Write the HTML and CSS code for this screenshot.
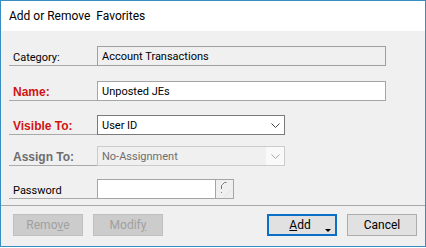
FILE: index.html
```html
<!DOCTYPE html>
<html>
<head>
<meta charset="utf-8">
<link rel="stylesheet" href="styles.css">
</head>
<body>
<div class="window">
  <div class="titlebar"><span class="title">Add or Remove&nbsp; Favorites</span></div>
  <div class="content">
    <div class="form">
      <div class="row r-cat">
        <div class="label">Category:</div>
        <div class="field readonly wide"><span class="val">Account Transactions</span></div>
      </div>
      <div class="row r-name">
        <div class="label req">Name:</div>
        <div class="field input wide"><span class="val">Unposted JEs</span></div>
      </div>
      <div class="row r-vis">
        <div class="label req">Visible To:</div>
        <div class="field select">
          <span class="val">User ID</span>
          <span class="arrow"><svg width="9" height="5" viewBox="0 0 9 5"><polyline points="0.5,0.5 4.5,4.5 8.5,0.5" fill="none" stroke="#444" stroke-width="1"/></svg></span>
        </div>
      </div>
      <div class="row r-assign">
        <div class="label dis">Assign To:</div>
        <div class="field select disabled">
          <span class="val">No-Assignment</span>
          <span class="arrow"><svg width="9" height="5" viewBox="0 0 9 5"><polyline points="0.5,0.5 4.5,4.5 8.5,0.5" fill="none" stroke="#a8a8a8" stroke-width="1"/></svg></span>
        </div>
      </div>
      <div class="row r-pw">
        <div class="label">Password</div>
        <div class="field input pw"></div>
        <div class="pwbtn">
          <svg width="17" height="20" viewBox="0 0 17 20">
            <path d="M10.5 2.5 L8.5 2.5 L6.5 4.5 L5.5 5.5 L5.5 9" fill="none" stroke="#777" stroke-width="1"/>
            <rect x="5" y="12" width="1" height="1" fill="#888"/>
            <path d="M8 17 L15 10" fill="none" stroke="#e2e2e2" stroke-width="1"/>
          </svg>
        </div>
      </div>
    </div>
    <div class="sep"></div>
    <div class="buttons">
      <div class="btn disabled">Remo<u>v</u>e</div>
      <div class="btn disabled">Modif<u>y</u></div>
      <div class="spacer"></div>
      <div class="btn default"><span class="addtxt"><u>A</u>dd</span><span class="drop"></span></div>
      <div class="btn">Cancel</div>
    </div>
  </div>
</div>
</body>
</html>
```

FILE: styles.css
```css
html, body {
  margin: 0;
  padding: 0;
  background: #ffffff;
}

body {
  width: 426px;
  height: 248px;
  overflow: hidden;
  font-family: Roboto, "Liberation Sans", sans-serif;
  font-size: 11px;
  color: #000;
}

.window {
  box-sizing: border-box;
  width: 426px;
  height: 247px;
  border: 1px solid #3a8dc2;
  background: #f0f0f0;
  display: flex;
  flex-direction: column;
}

.titlebar {
  height: 30px;
  background: #ffffff;
  display: flex;
  align-items: center;
  padding-left: 8px;
  padding-bottom: 1px;
  box-sizing: border-box;
}

.title {
  font-size: 12px;
  color: #000;
  white-space: pre;
}

.content {
  flex: 1;
  display: flex;
  flex-direction: column;
  padding-top: 15px;
}

.form {
  padding-left: 8px;
  display: flex;
  flex-direction: column;
}

.row {
  display: flex;
  height: 20px;
}

.r-name { margin-top: 15px; }
.r-vis { margin-top: 14px; }
.r-assign { margin-top: 11px; }
.r-pw { margin-top: 13px; }

.label {
  box-sizing: border-box;
  width: 88px;
  height: 20px;
  border-bottom: 1px solid #a9a9a9;
  padding-left: 4px;
  padding-top: 3px;
  display: flex;
  align-items: center;
  white-space: nowrap;
}

.label.req {
  font-family: "Liberation Sans", Arial, sans-serif;
  font-weight: bold;
  font-size: 12px;
  color: #d01414;
}

.label.dis {
  font-family: "Liberation Sans", Arial, sans-serif;
  font-weight: bold;
  font-size: 12px;
  color: #6d6d6d;
}

.field {
  box-sizing: border-box;
  height: 20px;
  border: 1px solid #a5a5a5;
  display: flex;
  align-items: center;
  padding-left: 4px;
  white-space: nowrap;
}

.field .val {
  flex: 1;
}

.wide { width: 289px; }

.readonly {
  background: #f0f0f0;
  border-color: #a0a0a0;
}

.input {
  background: #ffffff;
}

.select {
  width: 188px;
  background: #ffffff;
  border-color: #7a7a7a;
  padding-right: 0;
}

.select .arrow {
  width: 18px;
  height: 18px;
  display: flex;
  align-items: center;
  justify-content: center;
  padding-top: 1px;
  box-sizing: border-box;
}

.select.disabled {
  background: #f0f0f0;
  border-color: #cccccc;
  color: #6d6d6d;
}

.select.disabled .arrow {
  background: #f9f9f9;
}

.pw {
  width: 119px;
}

.pwbtn {
  box-sizing: border-box;
  width: 18px;
  height: 20px;
  border: 1px solid #a5a5a5;
  border-left: none;
  background: #efefef;
  display: flex;
}

.sep {
  margin-top: 6px;
  height: 1px;
  background: #a9a9a9;
}

.buttons {
  display: flex;
  margin-top: 8px;
  padding-left: 12px;
  padding-right: 8px;
  gap: 10px;
}

.spacer {
  flex: 1;
}

.btn {
  box-sizing: border-box;
  width: 70px;
  height: 22px;
  border: 1px solid #adadad;
  background: #e1e1e1;
  display: flex;
  align-items: center;
  justify-content: center;
  font-size: 12px;
  color: #000;
  position: relative;
}

.btn.disabled {
  background: #cccccc;
  border-color: #bfbfbf;
  color: #a0a0a0;
}

.btn.default {
  border: 2px solid #0a6fc6;
}

.addtxt {
  margin-right: 4px;
}

.drop {
  position: absolute;
  right: 4px;
  top: 13px;
  width: 0;
  height: 0;
  border-left: 3px solid transparent;
  border-right: 3px solid transparent;
  border-top: 3px solid #000;
}
```
